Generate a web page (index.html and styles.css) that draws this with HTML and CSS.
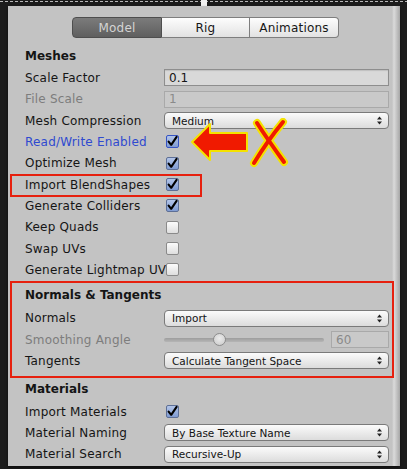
FILE: index.html
```html
<!DOCTYPE html>
<html>
<head>
<meta charset="utf-8">
<link rel="stylesheet" href="styles.css">
</head>
<body>
<div class="frame">
  <div class="dashline"></div>
  <div class="handle"></div>
  <div class="panel">
    <div class="tabs">
      <div class="tab sel t1">Model</div>
      <div class="tab t2">Rig</div>
      <div class="tab t3">Animations</div>
    </div>

    <div class="head first">Meshes</div>
    <div class="row"><span class="lbl">Scale Factor</span><span class="ctl"><span class="input">0.1</span></span></div>
    <div class="row"><span class="lbl dis">File Scale</span><span class="ctl"><span class="input disabled">1</span></span></div>
    <div class="row"><span class="lbl">Mesh Compression</span><span class="ctl"><span class="drop"><span>Medium</span><svg class="arr" width="5" height="9" viewBox="0 0 5 9"><path d="M0 3.6 L2.5 0.4 L5 3.6Z M0 5.4 L5 5.4 L2.5 8.6Z" fill="#222"/></svg></span></span></div>
    <div class="row"><span class="lbl blue">Read/Write Enabled</span><span class="ctl"><span class="cb on focus"><svg width="13" height="13" viewBox="0 0 13 13"><path d="M2.6 6.6 L5.2 9.8 L10.6 1.8" fill="none" stroke="#000" stroke-width="2.1" stroke-linecap="round" stroke-linejoin="round"/></svg></span></span></div>
    <div class="row"><span class="lbl">Optimize Mesh</span><span class="ctl"><span class="cb on"><svg width="13" height="13" viewBox="0 0 13 13"><path d="M2.6 6.6 L5.2 9.8 L10.6 1.8" fill="none" stroke="#000" stroke-width="2.1" stroke-linecap="round" stroke-linejoin="round"/></svg></span></span></div>
    <div class="row"><span class="lbl">Import BlendShapes</span><span class="ctl"><span class="cb on"><svg width="13" height="13" viewBox="0 0 13 13"><path d="M2.6 6.6 L5.2 9.8 L10.6 1.8" fill="none" stroke="#000" stroke-width="2.1" stroke-linecap="round" stroke-linejoin="round"/></svg></span></span><span class="mark"></span></div>
    <div class="row"><span class="lbl">Generate Colliders</span><span class="ctl"><span class="cb on"><svg width="13" height="13" viewBox="0 0 13 13"><path d="M2.6 6.6 L5.2 9.8 L10.6 1.8" fill="none" stroke="#000" stroke-width="2.1" stroke-linecap="round" stroke-linejoin="round"/></svg></span></span></div>
    <div class="row"><span class="lbl">Keep Quads</span><span class="ctl"><span class="cb"></span></span></div>
    <div class="row"><span class="lbl">Swap UVs</span><span class="ctl"><span class="cb"></span></span></div>
    <div class="row"><span class="lbl">Generate Lightmap UVs</span><span class="ctl"><span class="cb"></span></span></div>

    <div class="box">
      <div class="head inbox">Normals &amp; Tangents</div>
      <div class="row"><span class="lbl">Normals</span><span class="ctl"><span class="drop"><span>Import</span><svg class="arr" width="5" height="9" viewBox="0 0 5 9"><path d="M0 3.6 L2.5 0.4 L5 3.6Z M0 5.4 L5 5.4 L2.5 8.6Z" fill="#222"/></svg></span></span></div>
      <div class="row"><span class="lbl dis">Smoothing Angle</span><span class="ctl"><span class="slider"><span class="track"></span><span class="thumb"></span></span><span class="input disabled num">60</span></span></div>
      <div class="row"><span class="lbl">Tangents</span><span class="ctl"><span class="drop"><span>Calculate Tangent Space</span><svg class="arr" width="5" height="9" viewBox="0 0 5 9"><path d="M0 3.6 L2.5 0.4 L5 3.6Z M0 5.4 L5 5.4 L2.5 8.6Z" fill="#222"/></svg></span></span></div>
    </div>

    <div class="head mat">Materials</div>
    <div class="row"><span class="lbl">Import Materials</span><span class="ctl"><span class="cb on"><svg width="13" height="13" viewBox="0 0 13 13"><path d="M2.6 6.6 L5.2 9.8 L10.6 1.8" fill="none" stroke="#000" stroke-width="2.1" stroke-linecap="round" stroke-linejoin="round"/></svg></span></span></div>
    <div class="row"><span class="lbl">Material Naming</span><span class="ctl"><span class="drop"><span>By Base Texture Name</span><svg class="arr" width="5" height="9" viewBox="0 0 5 9"><path d="M0 3.6 L2.5 0.4 L5 3.6Z M0 5.4 L5 5.4 L2.5 8.6Z" fill="#222"/></svg></span></span></div>
    <div class="row"><span class="lbl">Material Search</span><span class="ctl"><span class="drop"><span>Recursive-Up</span><svg class="arr" width="5" height="9" viewBox="0 0 5 9"><path d="M0 3.6 L2.5 0.4 L5 3.6Z M0 5.4 L5 5.4 L2.5 8.6Z" fill="#222"/></svg></span></span></div>

    <svg class="annot" width="104" height="52" viewBox="0 0 104 52">
      <path d="M4 24 L22 6 L22 15 L59 15 L59 33 L22 33 L22 42 Z" fill="#f01a00" stroke="#f4e200" stroke-width="2" stroke-linejoin="round"/>
      <g fill="none" stroke-linecap="round">
        <path d="M69 5 Q80 22 96 44" stroke="#f4e200" stroke-width="8"/>
        <path d="M95 4 Q80 22 66 45" stroke="#f4e200" stroke-width="8"/>
        <path d="M69 5 Q80 22 96 44" stroke="#f01a00" stroke-width="4"/>
        <path d="M95 4 Q80 22 66 45" stroke="#f01a00" stroke-width="4"/>
      </g>
    </svg>
  </div>
</div>
</body>
</html>
```

FILE: styles.css
```css
* { box-sizing: border-box; }
html, body { margin: 0; padding: 0; }
body {
  background: #1c1c1c;
  font-family: "DejaVu Sans", "Liberation Sans", sans-serif;
  font-size: 12px;
  color: #151515;
  width: 407px;
  height: 469px;
  overflow: hidden;
}
.frame {
  position: relative;
  width: 407px;
  height: 469px;
  padding-top: 1px;
}
.dashline {
  height: 1px;
  background: repeating-linear-gradient(to right, #b8b8b8 0 3px, transparent 3px 5px);
}
.handle {
  position: absolute;
  left: 201px;
  top: 0;
  width: 6px;
  height: 6px;
  background: #f2f2f2;
}
.panel {
  position: relative;
  margin: 4px 0 0 8px;
  width: 392px;
  height: 460px;
  padding-top: 11px;
  background: linear-gradient(to right, #c3c3c3 0, #c3c3c3 384px, #dadada 386px, #a6a6a6 392px);
  box-shadow: 0 2px 3px rgba(0,0,0,0.55);
}
.tabs {
  display: flex;
  margin-left: 64px;
  height: 21px;
}
.tab {
  height: 21px;
  display: flex;
  align-items: center;
  justify-content: center;
  border: 1px solid #7e7e7e;
  border-left: none;
  background: linear-gradient(#fdfdfd, #e2e2e2);
  color: #161616;
  letter-spacing: 0.2px;
}
.t1 { width: 90px; border-left: 1px solid #4e4e4e; border-radius: 4px 0 0 4px; }
.t2 { width: 88px; }
.t3 { width: 89px; border-radius: 0 4px 4px 0; }
.tab.sel {
  background: linear-gradient(#7b7b7b, #5f5f5f);
  color: #d4d4d4;
  border-color: #4e4e4e;
}
.head {
  display: flex;
  align-items: center;
  font-weight: bold;
  padding-left: 17px;
}
.head.first { margin-top: 6px; height: 23.33px; }
.head.inbox { height: 25px; padding-left: 13px; }
.head.mat { height: 23.33px; }
.row {
  position: relative;
  display: flex;
  align-items: center;
  height: 21.33px;
  padding: 0 11px 0 17px;
}
.lbl {
  flex: none;
  width: 139px;
  white-space: nowrap;
  letter-spacing: 0.2px;
}
.lbl.dis { color: #7d7d7d; }
.lbl.blue { color: #2f4ad0; }
.ctl {
  flex: 1;
  min-width: 0;
  display: flex;
  align-items: center;
}
.input {
  flex: 1;
  height: 17px;
  display: flex;
  align-items: center;
  padding-left: 4px;
  border: 1px solid #8e8e8e;
  background: #d9d9d9;
  box-shadow: inset 0 1px 1px rgba(0,0,0,0.12);
  font-size: 12px;
}
.input.disabled {
  border-color: #a9a9a9;
  background: #c9c9c9;
  color: #8a8a8a;
  box-shadow: none;
}
.input.num { flex: none; width: 58px; margin-left: 7px; }
.drop {
  flex: 1;
  height: 17px;
  display: flex;
  align-items: center;
  justify-content: space-between;
  padding: 0 6px 0 7px;
  border: 1px solid #7a7a7a;
  border-radius: 4px;
  background: linear-gradient(#fbfbfb, #dcdcdc);
  font-size: 10.5px;
  color: #141414;
}
.arr { flex: none; }
.cb {
  flex: none;
  width: 13px;
  height: 13px;
  margin-left: 2px;
  border: 1px solid #8a8a8a;
  border-radius: 2px;
  background: linear-gradient(#fbfbfb, #dedede);
  display: flex;
}
.cb.on {
  border-color: #5d6f96;
  background: linear-gradient(#b3c5e8, #7f9bd2);
}
.cb.focus { border-color: #3553c4; }
.cb svg { overflow: visible; margin: -1px; }
.mark {
  position: absolute;
  left: 2px;
  top: 0;
  width: 192px;
  height: 23px;
  border: 2px solid #e6200e;
}
.box {
  margin: 0 6px 0 2px;
  border: 2px solid #e6200e;
  padding-bottom: 4px;
}
.box .row { padding: 0 3px 0 13px; }
.slider {
  position: relative;
  flex: none;
  width: 160px;
  height: 17px;
  display: flex;
  align-items: center;
}
.track {
  flex: 1;
  height: 4px;
  border-radius: 2px;
  background: linear-gradient(#9d9d9d, #b5b5b5);
}
.thumb {
  position: absolute;
  left: 49px;
  top: 2px;
  width: 13px;
  height: 13px;
  border-radius: 50%;
  border: 1px solid #8c8c8c;
  background: radial-gradient(circle at 50% 40%, #ececec, #c8c8c8);
}
.annot {
  position: absolute;
  left: 180px;
  top: 112px;
}
```
